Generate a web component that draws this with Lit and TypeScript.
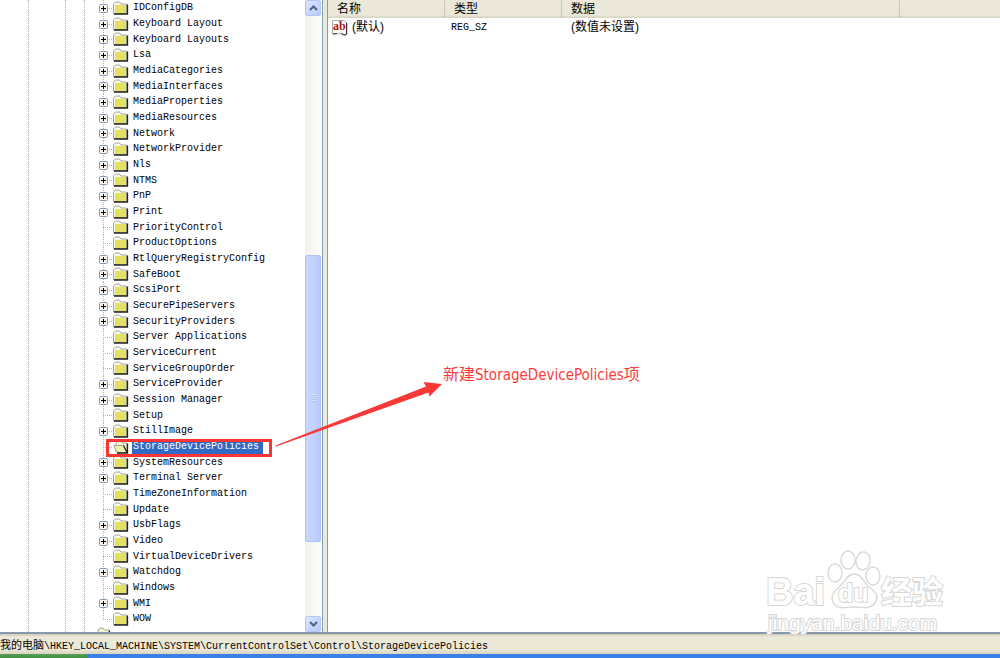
import { LitElement, html, svg, css, nothing } from "lit";
import { customElement, state } from "lit/decorators.js";
import { classMap } from "lit/directives/class-map.js";

interface RegistryKey {
  name: string;
  expandable: boolean;
}

const LEAVES = new Set([
  "PriorityControl", "ProductOptions", "Server Applications", "ServiceCurrent",
  "ServiceGroupOrder", "Setup", "StorageDevicePolicies", "TimeZoneInformation",
  "Update", "VirtualDeviceDrivers", "Windows", "WOW",
]);

const KEYS: RegistryKey[] = [
  "IDConfigDB", "Keyboard Layout", "Keyboard Layouts", "Lsa", "MediaCategories",
  "MediaInterfaces", "MediaProperties", "MediaResources", "Network",
  "NetworkProvider", "Nls", "NTMS", "PnP", "Print", "PriorityControl",
  "ProductOptions", "RtlQueryRegistryConfig", "SafeBoot", "ScsiPort",
  "SecurePipeServers", "SecurityProviders", "Server Applications",
  "ServiceCurrent", "ServiceGroupOrder", "ServiceProvider", "Session Manager",
  "Setup", "StillImage", "StorageDevicePolicies", "SystemResources",
  "Terminal Server", "TimeZoneInformation", "Update", "UsbFlags", "Video",
  "VirtualDeviceDrivers", "Watchdog", "Windows", "WMI", "WOW",
].map((name) => ({ name, expandable: !LEAVES.has(name) }));

const closedFolder = svg`
  <path d="M.5 12.500V3L2.500 1H6.500L8 3H13.500V12.500Z" fill="#f8f8e8" stroke="#a3a3a0"/>
  <rect x="2" y="4" width="11" height="8" fill="#e3e062"/>
  <path d="M1 13H14.500V3.500" fill="none" stroke="#222" stroke-width="1.3"/>`;

const openFolder = svg`
  <path d="M3 12V3L5 1H8L9.500 3H14V12Z" fill="#f3f3dc" stroke="#a3a38f"/>
  <path d="M.8 5.500H10.500L14 12.500H4Z" fill="#f4f1a8" stroke="#a3a38f"/>
  <path d="M4 13H14.500V3.500M10.500 5.500L14 12.500" fill="none" stroke="#222" stroke-width="1.3"/>`;

@customElement("app-root")
export class AppRoot extends LitElement {
  @state() private selected = "StorageDevicePolicies";

  static styles = css`
    :host {
      display: flex;
      flex-direction: column;
      height: 100vh;
      position: relative;
      overflow: hidden;
      background: #fff;
      color: #000;
      font: 12px/16px "Liberation Sans", "Noto Sans CJK SC", sans-serif;
    }
    button { font: inherit; color: inherit; border: 0; padding: 0; margin: 0; background: none; }
    .panes { flex: 1; min-height: 0; display: flex; border-bottom: 1px solid #7f9db9; }
    .tree {
      width: 305px;
      flex: none;
      display: flex;
      overflow: hidden;
    }
    .rail { border-right: 1px dotted #b5b5a2; }
    .rail.a { width: 28px; }
    .rail.b { width: 36px; }
    .rail.c { width: 18px; }
    .keys { list-style: none; margin: 0; padding: 0; flex: 1; min-width: 0; }
    .key { height: 16px; display: flex; align-items: center; padding-left: 13px; }
    .key:nth-child(3n) { height: 15px; }
    .joint {
      width: 15px;
      align-self: stretch;
      display: flex;
      align-items: center;
      background:
        repeating-linear-gradient(90deg, #b5b5a2 0 1px, #fff 1px 2px) 5px 50% / 10px 1px no-repeat,
        repeating-linear-gradient(#b5b5a2 0 1px, #fff 1px 2px) 5px 0 / 1px 100% no-repeat;
    }
    .joint.end {
      background:
        repeating-linear-gradient(90deg, #b5b5a2 0 1px, #fff 1px 2px) 5px 50% / 10px 1px no-repeat,
        repeating-linear-gradient(#b5b5a2 0 1px, #fff 1px 2px) 5px 0 / 1px 50% no-repeat;
    }
    .plus { width: 9px; height: 9px; display: block; margin-left: 1px; }
    .plus svg { display: block; }
    .folder { display: block; flex: none; margin-right: 3px; }
    .name {
      font: 10px/16px "Liberation Mono", "Noto Sans CJK SC", monospace;
      white-space: pre;
      padding: 0 4px 0 1px;
    }
    .name.selected { background: linear-gradient(#316ac5, #316ac5) 0 1px / 100% 14px no-repeat; color: #fff; }
    .parent { display: flex; padding-left: 10px; height: 16px; }
    .scroll {
      width: 16px;
      flex: none;
      display: flex;
      flex-direction: column;
      background: linear-gradient(90deg, #f1f0ea, #fefefc);
      border-right: 1px solid #fff;
    }
    .arrow {
      height: 16px;
      border: 1px solid #b4c8f6;
      border-radius: 2px;
      background: linear-gradient(135deg, #dce6ff, #b7cbfb);
      display: grid;
      place-items: center;
    }
    .track { flex: 1; display: flex; flex-direction: column; }
    .before { flex: 239; }
    .after { flex: 74; }
    .thumb {
      flex: 286;
      border: 1px solid #b0c3f2;
      border-radius: 2px;
      background: linear-gradient(90deg, #cad7ff, #bacafa);
      display: grid;
      place-items: center;
    }
    .grip { width: 7px; height: 8px; background: repeating-linear-gradient(#dfe8ff 0 1px, #a5bbf0 1px 2px); opacity: .6; }
    .splitter { width: 4px; flex: none; background: #ece9d8; border: solid #7f9db9; border-width: 0 1px; }
    .list { flex: 1; min-width: 0; }
    table { width: 100%; border-collapse: collapse; table-layout: fixed; }
    th, td { text-align: left; font-weight: 400; padding: 0 0 0 9px; white-space: nowrap; }
    .c-name, .c-type { width: 117px; }
    .c-data { width: 338px; }
    th {
      height: 18px;
      background: linear-gradient(#ebe8da 0 15px, #d5d1c1 18px);
      box-shadow: inset -1px 0 #c9c6b6;
      line-height: 18px;
    }
    th:last-child { box-shadow: none; }
    td { height: 19px; line-height: 19px; font-size: 12px; }
    td.first { padding-left: 4px; }
    td.type { font: 10px/19px "Liberation Mono", monospace; padding-left: 6px; }
    .value-name { display: flex; align-items: center; gap: 4px; }
    .ab { flex: none; }
    .ab text { font: 700 12px "Liberation Serif", serif; fill: #b01010; }
    .status {
      background: linear-gradient(#8f949a 0 1px, #cfccbd 1px, #ece9d8 4px 16px, #d8d4bf);
      height: 21px;
      flex: none;
      font: 10px/26px "Liberation Mono", "Noto Sans CJK SC", monospace;
      white-space: pre;
      overflow: hidden;
    }
    .status .cjk { font-size: 11px; }
    .taskbar { height: 4px; flex: none; background: #3a80e8; display: flex; }
    .start { width: 88px; background: linear-gradient(#5aa05a, #3c8b3c); border-radius: 0 4px 0 0; }
    .marks { position: absolute; left: 0; top: 0; pointer-events: none; }
    .note {
      position: absolute;
      left: 443px;
      top: 363px;
      color: #fb3c3c;
      font: 16px/20px "Noto Sans CJK SC", sans-serif;
      white-space: nowrap;
    }
    .note .latin { font: 15px/20px "DejaVu Sans Condensed", "Roboto", sans-serif; }
    .watermark { position: absolute; left: 760px; top: 545px; pointer-events: none; }
    .watermark text { fill: #fff; stroke: #d6d6d6; stroke-width: 2px; paint-order: stroke; }
    .watermark .latin { font: 700 38px "Liberation Sans", sans-serif; }
    .watermark .han { font: 700 31px/1 "Noto Sans CJK SC", sans-serif; }
    .watermark .du { font: 700 25px "Liberation Sans", sans-serif; }
    .watermark .site { font: 400 21px "Liberation Sans", sans-serif; }
  `;

  private renderKey(key: RegistryKey, index: number) {
    const selected = key.name === this.selected;
    return html`
      <li class="key">
        <span class=${classMap({ joint: true, end: index === KEYS.length - 1 })}>
          ${key.expandable
            ? html`<button class="plus" aria-label="展开 ${key.name}">
                <svg width="9" height="9"><rect x=".5" y=".5" width="8" height="8" rx="1" fill="#f4f3ee" stroke="#7f9db9"/><path d="M2 4.5H7M4.5 2V7" stroke="#000"/></svg>
              </button>`
            : nothing}
        </span>
        <svg class="folder" width="16" height="15">${selected ? openFolder : closedFolder}</svg>
        <button class=${classMap({ name: true, selected })} @click=${() => (this.selected = key.name)}>${key.name}</button>
      </li>`;
  }

  render() {
    return html`
      <div class="panes">
        <div class="tree">
          <div class="rail a"></div>
          <div class="rail b"></div>
          <div class="rail c"></div>
          <ul class="keys">
            ${KEYS.map((key, i) => this.renderKey(key, i))}
            <li class="parent"><svg width="16" height="15">${openFolder}</svg></li>
          </ul>
        </div>
        <div class="scroll">
          <button class="arrow" aria-label="向上滚动"><svg width="9" height="6"><path d="M1 5L4.500 1.500L8 5" fill="none" stroke="#4d6185" stroke-width="2"/></svg></button>
          <div class="track">
            <div class="before"></div>
            <div class="thumb"><div class="grip"></div></div>
            <div class="after"></div>
          </div>
          <button class="arrow" aria-label="向下滚动"><svg width="9" height="6"><path d="M1 1L4.500 4.500L8 1" fill="none" stroke="#4d6185" stroke-width="2"/></svg></button>
        </div>
        <div class="splitter"></div>
        <div class="list">
          <table>
            <colgroup><col class="c-name"><col class="c-type"><col class="c-data"><col></colgroup>
            <thead><tr><th>名称</th><th>类型</th><th>数据</th><th></th></tr></thead>
            <tbody>
              <tr>
                <td class="first">
                  <div class="value-name">
                    <svg class="ab" width="16" height="16">
                      <path d="M.5 14V.5H12L15 3V14L13 15L11 14L8.500 13L6 14L3.500 13.500Z" fill="#fff" stroke="#a8a8a8"/>
                      <path d="M14.500 3V14.500L12 15L9 13.500M1 14L5 13.500" fill="none" stroke="#333"/>
                      <text x="1" y="10">ab</text>
                    </svg>
                    <span>(默认)</span>
                  </div>
                </td>
                <td class="type">REG_SZ</td><td>(数值未设置)</td><td></td>
              </tr>
            </tbody>
          </table>
        </div>
      </div>
      <div class="status"><span class="cjk">我的电脑</span>\\HKEY_LOCAL_MACHINE\\SYSTEM\\CurrentControlSet\\Control\\StorageDevicePolicies</div>
      <div class="taskbar"><div class="start"></div></div>

      <svg class="watermark" width="200" height="100">
        <text class="latin" x="6" y="60">Bai</text>
        <g fill="#fff" stroke="#d9d9d9" stroke-width="1.5">
          <ellipse cx="75" cy="28" rx="7" ry="9"/>
          <ellipse cx="88" cy="15" rx="7" ry="9"/>
          <ellipse cx="103" cy="16" rx="7" ry="9" transform="rotate(8 103 16)"/>
          <ellipse cx="113" cy="31" rx="7" ry="9"/>
          <path d="M94 29C102 29 103 37 109 42C117 48 119 52 115 58C110 65 101 62 94 62C87 62 79 65 74 59C70 53 73 47 79 42C85 37 87 29 94 29Z"/>
        </g>
        <text class="du" x="78" y="57">du</text>
        <text class="han" x="121" y="58">经验</text>
        <text class="site" x="8" y="85">jingyan.baidu.com</text>
      </svg>
      <svg class="marks" width="460" height="470">
        <rect x="107.500" y="440.500" width="163" height="15" fill="none" stroke="#fb3434" stroke-width="3"/>
        <path d="M275.500 445.500L426 386.500L423.500 382L442 384L429.500 396.500L428.500 392.500L276 446.500Z" fill="#fb3838"/>
      </svg>
      <div class="note">新建<span class="latin">StorageDevicePolicies</span>项</div>
    `;
  }
}
